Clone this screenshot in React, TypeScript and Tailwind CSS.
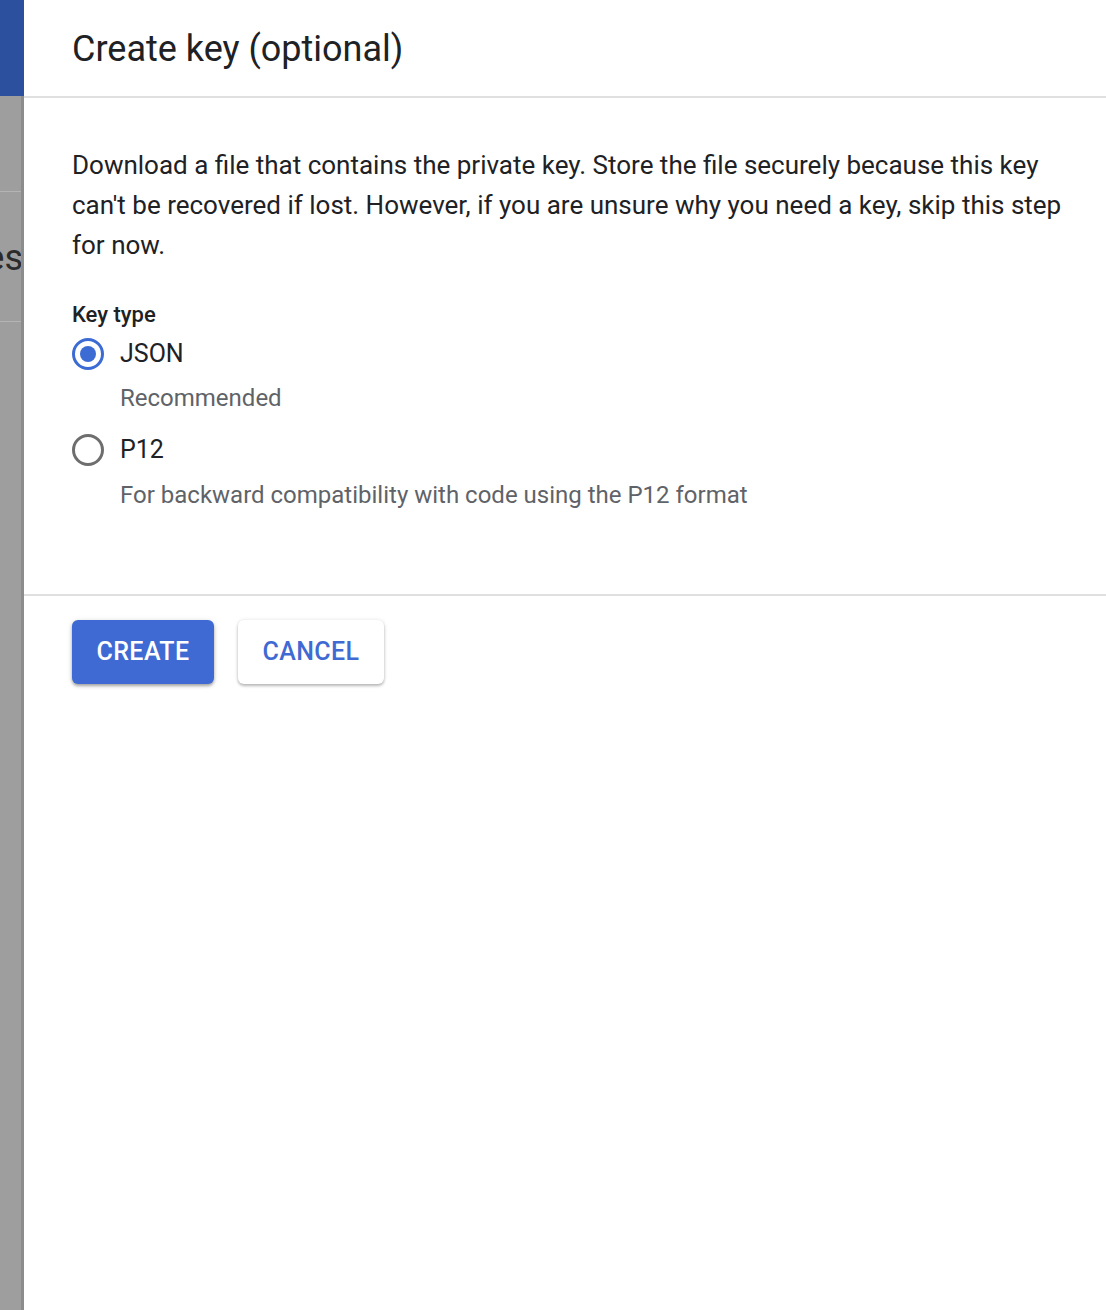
import React from "react";

export default function App() {
  return (
    <div className="flex h-[1310px] w-[1106px] overflow-hidden bg-white" style={{ fontFamily: "Roboto, 'Liberation Sans', sans-serif" }}>
      {/* left backdrop strip */}
      <div className="relative flex w-[24px] shrink-0 flex-col overflow-hidden bg-[#9e9e9e]">
        <div className="h-[96px] bg-[#2c509e]" />
        <div className="h-[96px] border-b border-[#b4b4b4]" />
        <div className="relative h-[130px] border-b border-[#b4b4b4]">
          <span className="absolute right-[1px] top-[48px] text-[36px] leading-none text-[#2b2b2b]">es</span>
        </div>
        <div className="absolute right-0 top-[96px] bottom-0 w-[3px] bg-[#8c8c8c]" />
      </div>

      {/* dialog */}
      <div className="flex flex-1 flex-col bg-white">
        <div className="flex h-[98px] items-center border-b-2 border-[#e0e0e0] pt-[2px] pl-[48px]">
          <h1 className="text-[36px] font-normal leading-none text-[#202124]">Create key (optional)</h1>
        </div>

        <div className="pl-[48px] pr-[40px] pt-[47px] pb-[84px]">
          <p className="text-[26px] leading-[40px] text-[#202124]">
            Download a file that contains the private key. Store the file securely because this key can't be recovered if lost. However, if you are unsure why you need a key, skip this step for now.
          </p>

          <div className="mt-[35px] text-[22px] font-medium leading-[30px] text-[#202124]">Key type</div>

          <div className="mt-[8px] flex flex-col">
            <div className="flex items-center gap-[16px]">
              <span className="flex h-[32px] w-[32px] items-center justify-center rounded-full border-[3px] border-[#3c6bd4]">
                <span className="h-[16px] w-[16px] rounded-full bg-[#3c6bd4]" />
              </span>
              <span className="text-[25px] leading-[32px] text-[#202124]">JSON</span>
            </div>
            <div className="ml-[48px] mt-[13px] text-[24px] leading-[30px] text-[#5f6368]">Recommended</div>

            <div className="mt-[21px] flex items-center gap-[16px]">
              <span className="h-[32px] w-[32px] rounded-full border-[3px] border-[#6e6e6e]" />
              <span className="text-[25px] leading-[32px] text-[#202124]">P12</span>
            </div>
            <div className="ml-[48px] mt-[14px] text-[24px] leading-[30px] text-[#5f6368]">For backward compatibility with code using the P12 format</div>
          </div>
        </div>

        <div className="border-t-2 border-[#e0e0e0] px-[48px] pt-[24px]">
          <div className="flex gap-[24px]">
            <button className="h-[64px] w-[142px] rounded-[6px] bg-[#3f6ad3] text-[25px] font-medium tracking-[0.4px] text-white shadow-[0_2px_3px_rgba(0,0,0,0.3),0_1px_6px_rgba(0,0,0,0.12)]">
              CREATE
            </button>
            <button className="h-[64px] w-[146px] rounded-[6px] bg-white text-[25px] font-medium tracking-[0.4px] text-[#3f6ad3] shadow-[0_2px_3px_rgba(0,0,0,0.25),0_0_4px_rgba(0,0,0,0.1)]">
              CANCEL
            </button>
          </div>
        </div>
      </div>
    </div>
  );
}
